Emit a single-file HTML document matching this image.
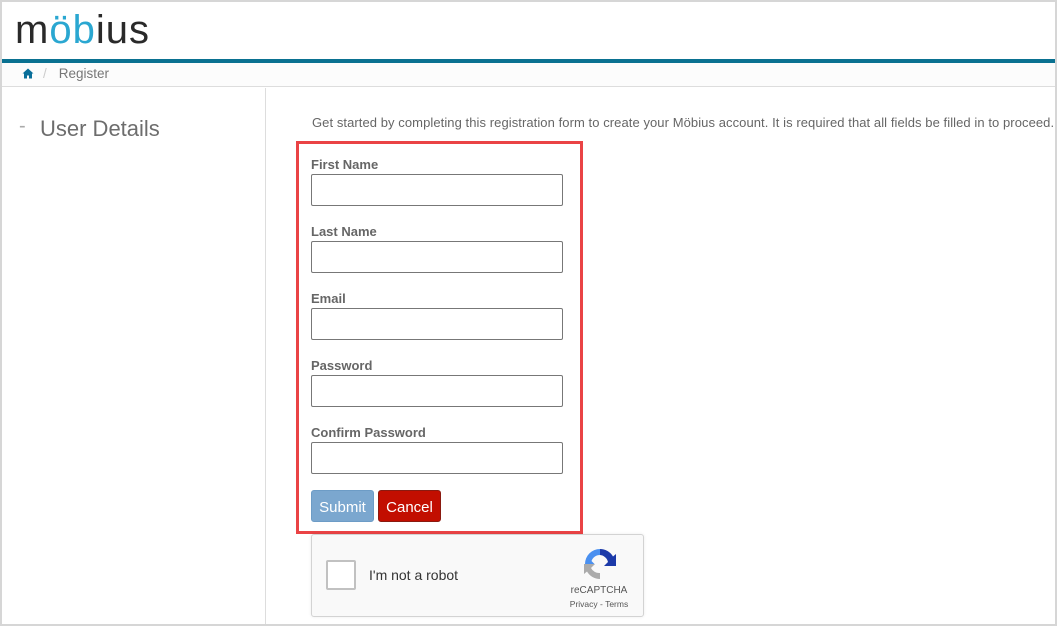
<!DOCTYPE html>
<html><head><meta charset="utf-8"><style>
*{box-sizing:border-box;margin:0;padding:0}
body{width:1057px;height:626px;overflow:hidden;background:#d6d6d6;font-family:"Liberation Sans",Arial,sans-serif;position:relative}
.frame{position:absolute;left:2px;top:2px;width:1053px;height:622px;background:#fff;overflow:hidden}
.logo{position:absolute;left:13px;top:6px;font-size:40px;color:#2a2a2a;letter-spacing:1px;font-family:"Liberation Sans",sans-serif;font-weight:normal;line-height:44px}
.logo .b{color:#2aa7d1}
.bar{position:absolute;left:0;top:57px;width:100%;height:4px;background:#0a7191}
.crumb{position:absolute;left:0;top:61px;width:100%;height:24px;background:#fcfcfc;border-bottom:1px solid #ddd;font-size:13.5px;color:#777;line-height:22px;padding-left:20px}
.crumb .sep{color:#ccc;margin:0 12px 0 9px}
.side{position:absolute;left:0;top:86px;width:264px;height:540px;border-right:1px solid #ddd}
.side .dash{position:absolute;left:17px;top:27px;color:#aaa;font-size:20px}
.side h2{position:absolute;left:38px;top:28px;font-weight:normal;font-size:22px;color:#6d6d6d}
.intro{position:absolute;left:310px;top:113px;font-size:13px;color:#666;white-space:nowrap;letter-spacing:0.07px}
.box{position:absolute;left:294px;top:139px;width:287px;height:393px;border:3px solid #ea4345}
label{position:absolute;left:309px;font-size:13px;font-weight:bold;color:#666}
.in{position:absolute;left:309px;width:252px;height:32px;border:1px solid #777;border-radius:2px}
.btn{position:absolute;top:488px;height:32px;border-radius:3px;color:#fff;font-size:15px;line-height:33px;text-align:center}
.cap{position:absolute;left:309px;top:532px;width:333px;height:83px;background:#f9f9f9;border:1px solid #d3d3d3;border-radius:3px;box-shadow:0 0 3px rgba(0,0,0,.08)}
.cb{position:absolute;left:14px;top:25px;width:30px;height:30px;border:2px solid #c1c1c1;border-radius:2px;background:#fff}
.cap .t{position:absolute;left:57px;top:32px;font-size:14px;color:#333}
.cap .r{position:absolute;left:257px;top:50px;font-size:10px;color:#555;text-align:center;width:60px}
.cap .p{position:absolute;left:252px;top:64px;font-size:8.5px;color:#555;width:70px;text-align:center}
</style></head><body>
<div class="frame">
<div class="logo">m<span class="b">öb</span>ius</div>
<div class="bar"></div>
<div class="crumb"><svg width="12" height="11" viewBox="0 0 12 11" style="vertical-align:-1px"><path d="M6 0.5L0.5 5.5h1.5V10.5h3V7.5h2v3h3V5.5h1.5z" fill="#0a6f9a"/></svg><span class="sep">/</span>Register</div>
<div class="side"><span class="dash">-</span><h2>User Details</h2></div>
<div class="intro">Get started by completing this registration form to create your Möbius account. It is required that all fields be filled in to proceed.</div>
<div class="box"></div>
<label style="top:155px">First Name</label><div class="in" style="top:172px"></div>
<label style="top:222px">Last Name</label><div class="in" style="top:239px"></div>
<label style="top:289px">Email</label><div class="in" style="top:306px"></div>
<label style="top:356px">Password</label><div class="in" style="top:373px"></div>
<label style="top:423px">Confirm Password</label><div class="in" style="top:440px"></div>
<div class="btn" style="left:309px;width:63px;background:#7ba7cf;border:1px solid #6d9cc6">Submit</div>
<div class="btn" style="left:376px;width:63px;background:#c20e00;border:1px solid #8a1a10">Cancel</div>
<div class="cap"><div class="cb"></div><div class="t">I'm not a robot</div>
<svg style="position:absolute;left:271px;top:12px" width="34" height="34" viewBox="0 0 34 34">
<path d="M17 2a15 15 0 0 1 13 7.5L33 7v12H21l4-4A9 9 0 0 0 17 8z" fill="#1c3aa9"/>
<path d="M2 17A15 15 0 0 1 17 2v6a9 9 0 0 0-8.5 6L12 17.5H2z" fill="#4a90f0"/>
<path d="M17 32A15 15 0 0 1 4 24.5L1 27V17h11l-4 4A9 9 0 0 0 17 26z" fill="#ababab"/>
</svg>
<div class="r">reCAPTCHA</div><div class="p">Privacy - Terms</div></div>
</div>
</body></html>
